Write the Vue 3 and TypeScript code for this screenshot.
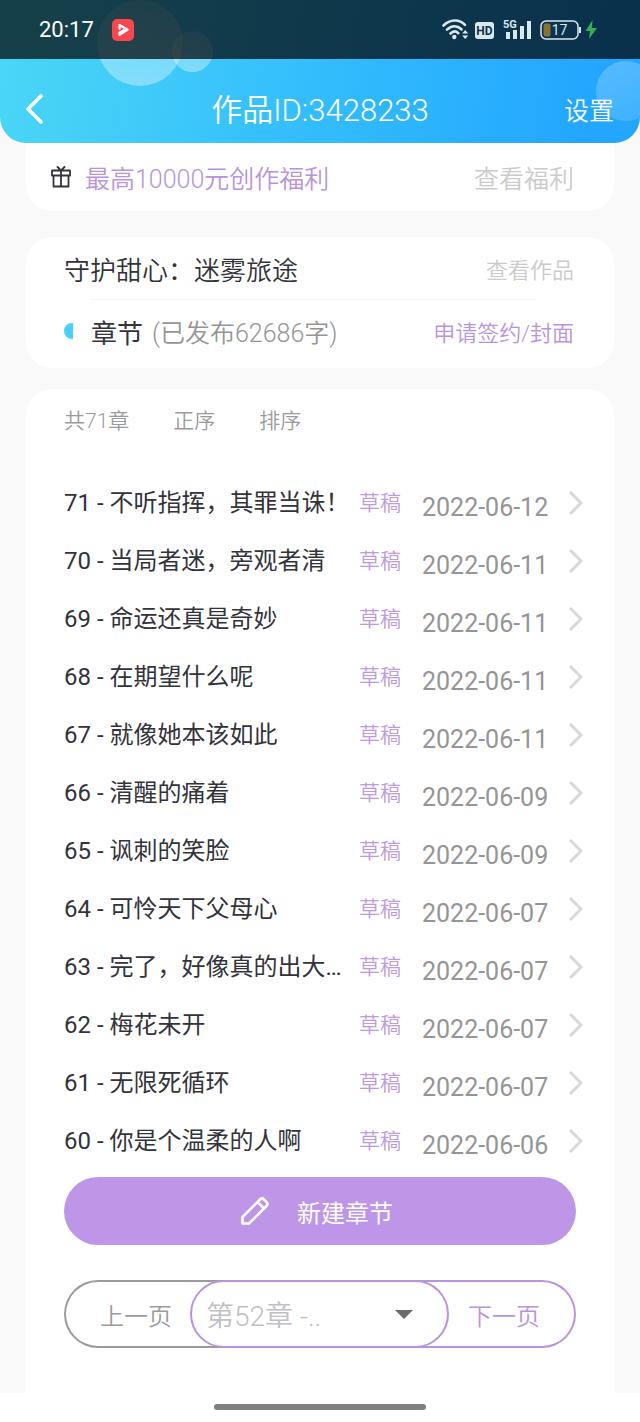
<script setup lang="ts">
import { ref } from 'vue'

interface Chapter {
  no: number
  title: string
  date: string
}

const chapters: Chapter[] = [
  { no: 71, title: '不听指挥，其罪当诛！', date: '2022-06-12' },
  { no: 70, title: '当局者迷，旁观者清', date: '2022-06-11' },
  { no: 69, title: '命运还真是奇妙', date: '2022-06-11' },
  { no: 68, title: '在期望什么呢', date: '2022-06-11' },
  { no: 67, title: '就像她本该如此', date: '2022-06-11' },
  { no: 66, title: '清醒的痛着', date: '2022-06-09' },
  { no: 65, title: '讽刺的笑脸', date: '2022-06-09' },
  { no: 64, title: '可怜天下父母心', date: '2022-06-07' },
  { no: 63, title: '完了，好像真的出大…', date: '2022-06-07' },
  { no: 62, title: '梅花未开', date: '2022-06-07' },
  { no: 61, title: '无限死循环', date: '2022-06-07' },
  { no: 60, title: '你是个温柔的人啊', date: '2022-06-06' },
]

const jumpTo = ref('52')
</script>

<template>
  <div class="page">
    <header class="header">
      <span class="bubble bubble-large"></span>
      <span class="bubble bubble-small"></span>
      <span class="bubble bubble-right"></span>
      <div class="status">
        <span class="clock">20:17</span>
        <svg class="app-badge" width="22" height="22" viewBox="0 0 22 22" aria-hidden="true">
          <rect width="22" height="22" rx="5" fill="#f8474f" />
          <path d="M7.5 9.8V6L15.6 10.8L7.5 15.8V13.6L11.6 11.2" fill="none" stroke="#fff" stroke-width="2.2" stroke-linejoin="round" stroke-linecap="round" />
        </svg>
        <svg class="status-icons" width="158" height="24" viewBox="0 0 158 24" aria-hidden="true">
          <g fill="none" stroke="#dce8ef" stroke-width="2.6" stroke-linecap="round">
            <path d="M2.5 7.5C9 1 18.5 1 24 6.8" />
            <path d="M6 11.7C10.5 7.2 16 7.2 20.5 11.3" />
            <path d="M9.5 15.5C12 13 15 13 17.3 15.2" />
          </g>
          <circle cx="13.3" cy="19" r="2.2" fill="#dce8ef" />
          <path d="M21.2 15.5L24.2 12L27.2 15.5ZM21.2 17.5L24.2 21L27.2 17.5Z" fill="#dce8ef" />
          <rect x="34" y="4" width="19" height="17" rx="3" fill="#dce8ef" />
          <text x="43.5" y="17" text-anchor="middle" font-size="12" font-weight="700" fill="#0f344b">HD</text>
          <text x="62" y="10" font-size="11" font-weight="700" fill="#dce8ef">5G</text>
          <path d="M65 14h4v7h-4zM72 12h4v9h-4zM79 8h4v13h-4zM86 3h4v18h-4z" fill="#dce8ef" />
          <rect x="100" y="3" width="37" height="18" rx="5" fill="none" stroke="#dce8ef" stroke-width="1.5" />
          <path d="M139 9v6" stroke="#dce8ef" stroke-width="2" />
          <rect x="102.5" y="5.5" width="7" height="13" rx="2" fill="#857432" />
          <text x="118.5" y="17" text-anchor="middle" font-size="14" fill="#dce8ef">17</text>
          <path d="M151.5 2L144.5 13H149L148 21L156 10H151Z" fill="#35ad58" />
        </svg>
      </div>
      <div class="nav">
        <button class="back" type="button" aria-label="返回">
          <svg width="17" height="30" viewBox="0 0 17 30">
            <path d="M15 2L2 15L15 28" fill="none" stroke="#fff" stroke-width="3.6" stroke-linecap="round" stroke-linejoin="round" />
          </svg>
        </button>
        <h1>作品ID:3428233</h1>
        <button class="settings" type="button">设置</button>
      </div>
    </header>

    <main>
      <section class="card promo">
        <svg width="20" height="22" viewBox="0 0 20 22" fill="none" stroke="#34343c" stroke-width="1.8" stroke-linejoin="round" stroke-linecap="round" aria-hidden="true">
          <path d="M1 4.5H19V9.5H1ZM2.5 9.5V20.5H17.5V9.5M10 4.5V20.5M6.5 1L10 4.5L13.5 1" />
        </svg>
        <span class="promo-text">最高10000元创作福利</span>
        <a class="promo-link" href="#benefits">查看福利</a>
      </section>

      <section class="card work">
        <div class="work-row">
          <h2>守护甜心：迷雾旅途</h2>
          <a class="muted-link" href="#work">查看作品</a>
        </div>
        <hr />
        <div class="work-row stats">
          <span class="half-dot"></span>
          <h2>章节</h2>
          <span class="count">(已发布62686字)</span>
          <a class="accent-link" href="#contract">申请签约/封面</a>
        </div>
      </section>

      <section class="card chapters">
        <div class="toolbar">
          <span class="total">共71章</span>
          <button type="button">正序</button>
          <button type="button">排序</button>
        </div>
        <ul>
          <li v-for="chapter in chapters" :key="chapter.no">
            <a class="chapter" :href="`#chapter-${chapter.no}`">
              <span class="name">{{ chapter.no }} - {{ chapter.title }}</span>
              <span class="draft">草稿</span>
              <time :datetime="chapter.date">{{ chapter.date }}</time>
              <svg width="15" height="24" viewBox="0 0 15 24" aria-hidden="true">
                <path d="M2 1L13 12L2 23" fill="none" stroke="#d9d9d9" stroke-width="3" />
              </svg>
            </a>
          </li>
        </ul>
        <button class="create" type="button">
          <svg width="28" height="28" viewBox="0 0 28 28" fill="none" stroke="#fff" stroke-width="2.6" stroke-linejoin="round" aria-hidden="true">
            <path d="M1.5 26.5V20L19 2.5Q21 .5 23 2.5L25.5 5Q27.5 7 25.5 9L8 26.5ZM16.5 5L23 11.5" />
          </svg>
          <span>新建章节</span>
        </button>
        <div class="pager">
          <button class="prev" type="button">上一页</button>
          <div class="jump">
            <select v-model="jumpTo" aria-label="选择章节">
              <option value="52">第52章 -..</option>
            </select>
            <svg width="18" height="9" viewBox="0 0 18 9" aria-hidden="true">
              <path d="M0 0H18L9 9Z" fill="#696b6b" />
            </svg>
          </div>
          <button class="next" type="button">下一页</button>
        </div>
      </section>
    </main>

    <footer><span class="home-bar"></span></footer>
  </div>
</template>

<style>
body {
  background: #fff;
}
</style>

<style scoped>
.page {
  font-family: Roboto, "Noto Sans CJK SC", sans-serif;
  font-weight: 400;
  background: #f9f9f9;
  color: #33333b;
}

.page * {
  box-sizing: border-box;
}

button,
select {
  font-family: inherit;
  font-weight: inherit;
  background: none;
  border: 0;
  padding: 0;
  margin: 0;
  cursor: pointer;
}

a {
  color: inherit;
  text-decoration: none;
}

h1,
h2 {
  margin: 0;
  font-weight: inherit;
}

svg {
  display: block;
  flex: none;
}

.header {
  position: relative;
  overflow: hidden;
  border-radius: 0 0 26px 26px;
  background: linear-gradient(100deg, #4bd7f5 0%, #37c1fc 42%, #22a6ff 92%);
  color: #fff;
}

.bubble {
  position: absolute;
  border-radius: 50%;
  background: linear-gradient(rgba(255, 255, 255, 0.2), rgba(255, 255, 255, 0.36));
}

.bubble-large {
  left: 97px;
  top: 0;
  width: 86px;
  height: 86px;
}

.bubble-small {
  left: 172px;
  top: 31px;
  width: 41px;
  height: 41px;
}

.bubble-right {
  right: -16px;
  top: 61px;
  width: 60px;
  height: 60px;
  background: linear-gradient(150deg, rgba(255, 255, 255, 0.24), rgba(255, 255, 255, 0.12));
}

.status {
  position: relative;
  display: flex;
  align-items: center;
  height: 59px;
  padding: 0 41px 0 39px;
  background: rgba(0, 0, 0, 0.7);
}

.clock {
  font-size: 22px;
}

.app-badge {
  margin-left: 18px;
}

.status-icons {
  margin-left: auto;
}

.nav {
  position: relative;
  display: grid;
  grid-template-columns: 1fr auto 1fr;
  align-items: center;
  height: 84px;
  padding: 16px 26px 0 26px;
}

.back {
  justify-self: start;
}

.nav h1 {
  padding-top: 4px;
  font-size: 31px;
  font-weight: 350;
  line-height: 42px;
}

.settings {
  justify-self: end;
  font-size: 25px;
  font-weight: 350;
  color: #fff;
}

main {
  padding: 0 26px;
}

.card {
  background: #fff;
  border-radius: 26px;
}

.promo {
  display: flex;
  align-items: center;
  height: 68px;
  padding: 0 40px 0 25px;
  border-radius: 0 0 26px 26px;
  font-size: 25px;
  font-weight: 350;
}

.promo-text {
  margin-left: 14px;
  color: #b794dc;
}

.promo-link {
  margin-left: auto;
  color: #cbcbcb;
}

.work {
  margin-top: 26px;
  padding: 0 40px 0 38px;
  font-weight: 350;
}

.work-row {
  display: flex;
  align-items: center;
  height: 62px;
}

.work-row h2 {
  font-size: 26px;
}

.work-row a {
  margin-left: auto;
  font-size: 22px;
}

.work hr {
  height: 1px;
  margin: 0 38px 0 26px;
  border: 0;
  background: #f3f3f3;
}

.work-row.stats {
  height: 68px;
  padding-bottom: 6px;
}

.stats h2 {
  font-weight: 400;
}

.half-dot {
  width: 9px;
  height: 16px;
  margin-right: 18px;
  border-radius: 9px 0 0 9px;
  background: #49d0f4;
}

.count {
  margin-left: 9px;
  font-size: 25px;
  color: #959595;
}

.muted-link {
  color: #cbcbcb;
}

.accent-link {
  color: #b794dc;
}

.chapters {
  margin-top: 21px;
  padding: 0 38px 45px;
  border-radius: 26px 26px 0 0;
}

.toolbar {
  display: flex;
  align-items: center;
  gap: 44px;
  height: 64px;
  padding-bottom: 4px;
  font-size: 21px;
  font-weight: 350;
  color: #9b9b9b;
}

.toolbar button {
  font-size: 21px;
  color: #9b9b9b;
}

ul {
  list-style: none;
  margin: 21px -7px 7px 0;
  padding: 0;
}

.chapter {
  display: flex;
  align-items: center;
  height: 58px;
}

.name {
  flex: 1;
  min-width: 0;
  padding-bottom: 6px;
  font-size: 24px;
  white-space: nowrap;
}

.draft {
  margin-left: 14px;
  padding-bottom: 4px;
  font-size: 21px;
  font-weight: 350;
  color: #bd9ae0;
}

time {
  width: 128px;
  margin: 0 18px 0 21px;
  padding-top: 8px;
  font-size: 25px;
  color: #959595;
}

.create {
  display: flex;
  align-items: center;
  justify-content: center;
  gap: 28px;
  width: 100%;
  height: 68px;
  padding-right: 6px;
  border-radius: 34px;
  background: #be96e7;
  color: #fff;
  font-size: 24px;
}

.pager {
  display: grid;
  grid-template-columns: 126fr 259fr 127fr;
  height: 68px;
  margin-top: 35px;
  font-weight: 350;
}

.prev,
.next {
  border: 2px solid #9b9b9b;
  font-size: 24px;
  color: #9b9b9b;
}

.prev {
  margin-right: -34px;
  padding-left: 34px;
  border-right: 0;
  border-radius: 34px 0 0 34px;
  text-align: left;
}

.next {
  margin-left: -34px;
  padding-right: 34px;
  border-left: 0;
  border-radius: 0 34px 34px 0;
  text-align: right;
  border-color: #b794dc;
  color: #b794dc;
}

.jump {
  position: relative;
  z-index: 1;
}

.jump select {
  appearance: none;
  width: 100%;
  height: 100%;
  padding: 4px 60px 0 14px;
  border: 2px solid #b794dc;
  border-radius: 34px;
  background: #fff;
  font-size: 28px;
  color: #bfbfc4;
}

.jump svg {
  position: absolute;
  right: 36px;
  top: 30px;
  pointer-events: none;
}

footer {
  display: flex;
  justify-content: center;
  height: 29px;
  padding-top: 11px;
  background: #fff;
}

.home-bar {
  width: 33%;
  height: 6px;
  border-radius: 3px;
  background: #808080;
}
</style>
